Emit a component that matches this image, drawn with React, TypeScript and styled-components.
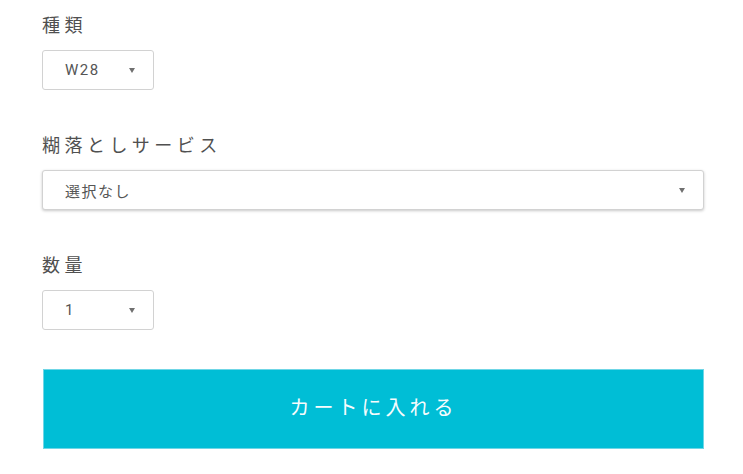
import styled, { createGlobalStyle } from 'styled-components';
import React from 'react';

const GlobalStyle = createGlobalStyle`
  body {
    margin: 0;
    background: #fff;
    font-family: 'Roboto', 'Noto Sans CJK JP', sans-serif;
  }
`;

const Wrapper = styled.form`
  display: flex;
  flex-direction: column;
  padding: 11px 39px 0 42px;
`;

const Field = styled.div`
  display: flex;
  flex-direction: column;
  margin-bottom: 41px;

  &:last-of-type {
    margin-bottom: 39px;
  }
`;

const Label = styled.div`
  height: 26px;
  line-height: 26px;
  margin-bottom: 13px;
  font-family: 'Noto Sans CJK JP', sans-serif;
  font-size: 18px;
  font-weight: 400;
  letter-spacing: 0.25em;
  color: #505050;
`;

const SelectBox = styled.div<{ $wide?: boolean }>`
  display: flex;
  align-items: center;
  justify-content: space-between;
  box-sizing: border-box;
  width: ${(p) => (p.$wide ? '662px' : '112px')};
  height: 40px;
  padding: 0 18px 0 22px;
  border: 1px solid #d2d2d2;
  border-radius: 3px;
  background: #fff;
  box-shadow: ${(p) => (p.$wide ? '0 1px 3px rgba(0, 0, 0, 0.22)' : 'none')};
  font-family: 'Roboto', 'Noto Sans CJK JP', sans-serif;
  font-size: 15px;
  letter-spacing: 0.1em;
  color: #555;
`;

const Arrow = styled.span`
  width: 0;
  height: 0;
  border-left: 3px solid transparent;
  border-right: 3px solid transparent;
  border-top: 5px solid #707070;
`;

const CartButton = styled.button`
  width: 661px;
  height: 80px;
  margin-left: 1px;
  padding: 0 0 5px;
  border: 1px solid #6fd6e6;
  background: #00bed6;
  color: #f7fcfd;
  font-family: 'Noto Sans CJK JP', sans-serif;
  font-size: 20px;
  font-weight: 400;
  letter-spacing: 0.2em;
  cursor: pointer;
`;

export default function App() {
  return (
    <>
      <GlobalStyle />
      <Wrapper>
        <Field>
          <Label>種類</Label>
          <SelectBox>
            <span>W28</span>
            <Arrow />
          </SelectBox>
        </Field>
        <Field>
          <Label>糊落としサービス</Label>
          <SelectBox $wide>
            <span>選択なし</span>
            <Arrow />
          </SelectBox>
        </Field>
        <Field>
          <Label>数量</Label>
          <SelectBox>
            <span>1</span>
            <Arrow />
          </SelectBox>
        </Field>
        <CartButton type="button">カートに入れる</CartButton>
      </Wrapper>
    </>
  );
}
